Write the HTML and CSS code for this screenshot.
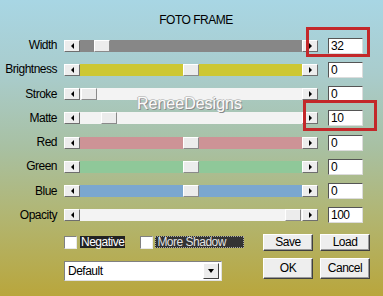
FILE: index.html
```html
<!DOCTYPE html>
<html lang="en">
<head>
  <meta charset="UTF-8">
  <meta name="viewport" content="width=device-width, initial-scale=1">
  <title>Foto Frame</title>
  <link rel="stylesheet" href="styles.css">
</head>
<body>

<div class="dialog">
  <h1 class="title">FOTO FRAME</h1>

  <div class="rows">
    <div class="row">
      <span class="name">Width</span>
      <div class="slider">
        <span class="arrow left"></span>
        <div class="track gray"><span class="thumb" style="margin-left:14px"></span></div>
        <span class="arrow right"></span>
      </div>
      <span class="value">32</span>
    </div>
    <div class="row">
      <span class="name">Brightness</span>
      <div class="slider">
        <span class="arrow left"></span>
        <div class="track yellow"><span class="thumb" style="margin-left:103px"></span></div>
        <span class="arrow right"></span>
      </div>
      <span class="value">0</span>
    </div>
    <div class="row">
      <span class="name">Stroke</span>
      <div class="slider">
        <span class="arrow left"></span>
        <div class="track white"><span class="thumb" style="margin-left:1px"></span></div>
        <span class="arrow right"></span>
      </div>
      <span class="value">0</span>
    </div>
    <div class="row">
      <span class="name">Matte</span>
      <div class="slider">
        <span class="arrow left"></span>
        <div class="track white"><span class="thumb" style="margin-left:21px"></span></div>
        <span class="arrow right"></span>
      </div>
      <span class="value">10</span>
    </div>
    <div class="row">
      <span class="name">Red</span>
      <div class="slider">
        <span class="arrow left"></span>
        <div class="track red"><span class="thumb" style="margin-left:103px"></span></div>
        <span class="arrow right"></span>
      </div>
      <span class="value">0</span>
    </div>
    <div class="row">
      <span class="name">Green</span>
      <div class="slider">
        <span class="arrow left"></span>
        <div class="track green"><span class="thumb" style="margin-left:103px"></span></div>
        <span class="arrow right"></span>
      </div>
      <span class="value">0</span>
    </div>
    <div class="row">
      <span class="name">Blue</span>
      <div class="slider">
        <span class="arrow left"></span>
        <div class="track blue"><span class="thumb" style="margin-left:103px"></span></div>
        <span class="arrow right"></span>
      </div>
      <span class="value">0</span>
    </div>
    <div class="row">
      <span class="name">Opacity</span>
      <div class="slider">
        <span class="arrow left"></span>
        <div class="track white"><span class="thumb" style="margin-left:205px"></span></div>
        <span class="arrow right"></span>
      </div>
      <span class="value">100</span>
    </div>
  </div>

  <div class="bottom">
    <div class="checks">
      <span class="box"></span>
      <span class="check-label">Negative</span>
      <span class="box second"></span>
      <span class="check-label focus">More Shadow</span>
    </div>
    <button class="btn">Save</button>
    <button class="btn">Load</button>
    <div class="select">
      <span class="select-text">Default</span>
      <span class="select-arrow"></span>
    </div>
    <button class="btn">OK</button>
    <button class="btn">Cancel</button>
  </div>

  <!-- watermark + red callouts sit on top -->
  <div class="mark">ReneeDesigns</div>
  <div class="callout c1"></div>
  <div class="callout c2"></div>
</div>

</body>
</html>
```

FILE: styles.css
```css
body {
  margin: 0;
  padding: 0;
  font-family: "Liberation Sans", Arial, sans-serif;
  font-size: 12px;
  letter-spacing: -0.5px;
  color: #000;
}
.dialog {
  position: relative;
  width: 383px;
  height: 296px;
  overflow: hidden;
  background: linear-gradient(to bottom, #a8d6e4 0%, #a9cccc 25%, #a8c0a2 50%, #b1b674 72%, #b9a63c 100%);
}
.title {
  margin: 0;
  padding: 13px 0 0 9px;
  font-size: 12px;
  font-weight: normal;
  line-height: 15px;
  text-align: center;
}
.rows {
  display: grid;
  row-gap: 11.25px;
  margin-top: 11px;
}
.row {
  display: flex;
  align-items: center;
  height: 13px;
}
.name {
  width: 57px;
  margin-right: 7px;
  text-align: right;
  line-height: 13px;
}
.slider {
  display: flex;
  height: 12px;
  width: 254px;
}
.arrow {
  width: 16px;
  height: 12px;
  box-sizing: border-box;
  background: #ededed;
  border: 1px solid;
  border-color: #fff #6e6e6e #6e6e6e #fff;
  display: flex;
  align-items: center;
  justify-content: center;
}
.arrow::before {
  content: "";
  border-top: 3px solid transparent;
  border-bottom: 3px solid transparent;
}
.arrow.left::before {
  border-right: 3px solid #000;
}
.arrow.right::before {
  border-left: 3px solid #000;
}
.track {
  flex: 1;
  display: flex;
}
.gray { background: #878787; }
.yellow { background: #cdc733; }
.white { background: #f3f3f3; }
.red { background: #cd9396; }
.green { background: #8fc899; }
.blue { background: #7ba7cf; }
.thumb {
  width: 16px;
  height: 12px;
  box-sizing: border-box;
  background: #ececec;
  border: 1px solid;
  border-color: #fff #8a8a8a #8a8a8a #fff;
}
.value {
  margin-left: 10px;
  width: 35px;
  height: 16px;
  box-sizing: border-box;
  background: #fff;
  border: 1px solid;
  border-color: #555 #dcdcdc #dcdcdc #555;
  padding-left: 2px;
  line-height: 14px;
}
.bottom {
  display: grid;
  grid-template-columns: 192px 50px 50px;
  grid-template-rows: 17px 21px;
  column-gap: 7px;
  row-gap: 7px;
  margin: 12px 0 0 64px;
}
.checks {
  display: flex;
  align-items: center;
}
.box {
  width: 13px;
  height: 13px;
  box-sizing: border-box;
  background: #fff;
  border: 1px solid;
  border-color: #808080 #e8e8e8 #e8e8e8 #808080;
  margin-right: 3px;
}
.box.second {
  margin-left: 15px;
  margin-right: 2px;
}
.check-label {
  background: #222;
  color: #fff;
  height: 12px;
  line-height: 12px;
  padding: 0 1px;
}
.check-label.focus {
  width: 89px;
  box-sizing: border-box;
  background: #333;
  color: #e2e2e2;
  border: 1px dotted #aaa;
  line-height: 10px;
}
.btn {
  font: inherit;
  letter-spacing: inherit;
  margin: 0;
  padding: 0;
  background: #eeeeee;
  border: 1px solid;
  border-color: #fff #404040 #404040 #fff;
  box-shadow: inset -1px -1px 0 #9a9a9a;
  color: #000;
  line-height: 15px;
}
.select {
  display: flex;
  width: 158px;
  height: 20px;
  margin-top: 3px;
  box-sizing: border-box;
  background: #fff;
  border: 1px solid;
  border-color: #808080 #e0e0e0 #e0e0e0 #808080;
  padding: 1px 2px 1px 3px;
}
.select-text {
  flex: 1;
  line-height: 17px;
}
.select-arrow {
  width: 16px;
  box-sizing: border-box;
  background: #ececec;
  border: 1px solid;
  border-color: #fff #404040 #404040 #fff;
  display: flex;
  align-items: center;
  justify-content: center;
}
.select-arrow::before {
  content: "";
  border-left: 3px solid transparent;
  border-right: 3px solid transparent;
  border-top: 4px solid #000;
}
.mark {
  position: absolute;
  left: 137px;
  top: 95px;
  font-size: 16px;
  letter-spacing: 0;
  line-height: 18px;
  color: #fbfbfb;
  text-shadow: 1px 1px 0 #8a8a8a, -1px 0 0 #b8b8b8, 0 -1px 0 #c8c8c8;
}
.callout {
  position: absolute;
  border: 3px solid #c3282a;
  box-sizing: border-box;
}
.c1 {
  left: 306px;
  top: 27px;
  width: 64px;
  height: 30px;
}
.c2 {
  left: 303px;
  top: 100px;
  width: 74px;
  height: 31px;
}
```
